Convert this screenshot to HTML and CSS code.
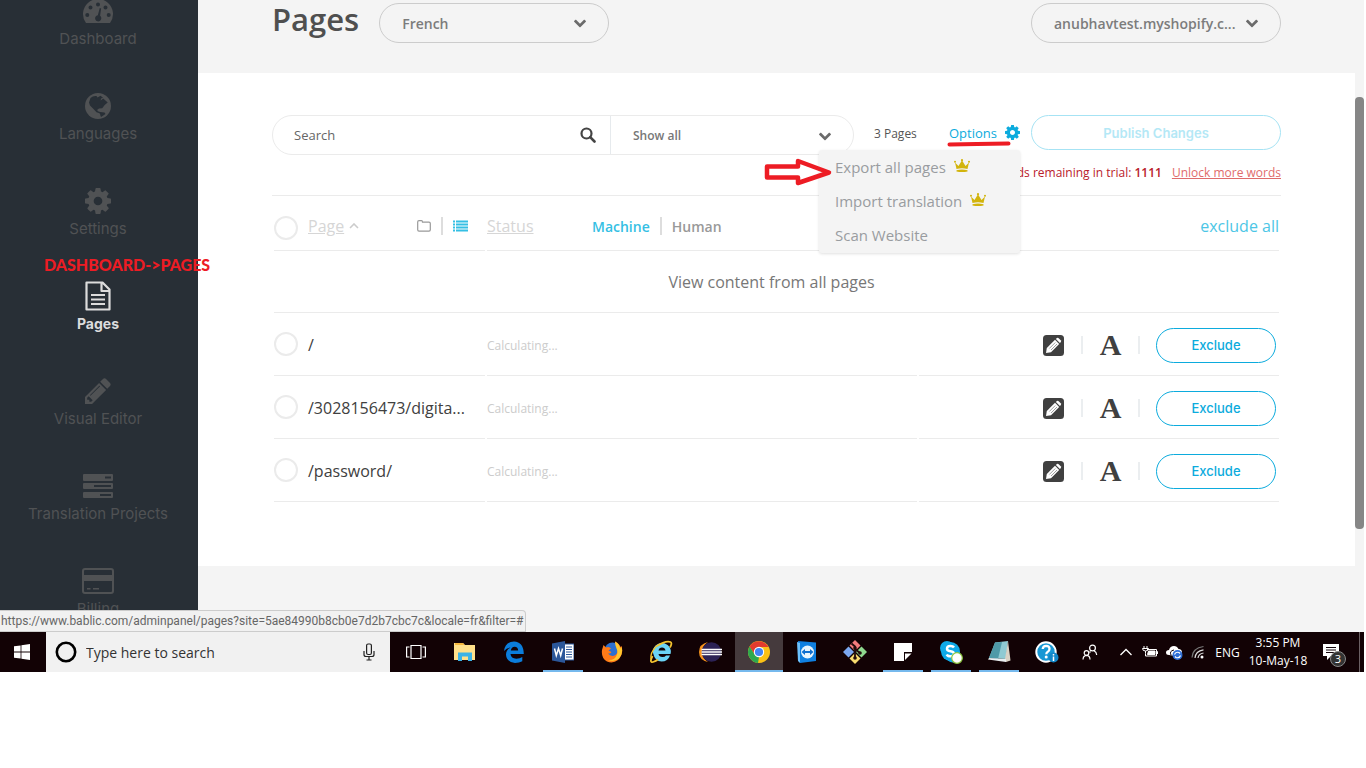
FILE: index.html
```html
<!DOCTYPE html>
<html lang="en">
<head>
<meta charset="utf-8">
<title>Pages</title>
<link rel="stylesheet" href="styles.css">
</head>
<body>
<svg class="sprite" aria-hidden="true">
  <symbol id="cog" viewBox="128 128 1536 1536"><path d="M1152 896q0-106-75-181t-181-75-181 75-75 181 75 181 181 75 181-75 75-181zm512-109v222q0 12-8 23t-20 13l-185 28q-19 54-39 91 35 50 107 138 10 12 10 25t-9 23q-27 37-99 108t-94 71q-12 0-26-9l-138-108q-44 23-91 38-16 136-29 186-7 28-36 28h-222q-14 0-24.500-8.500t-11.500-21.500l-28-184q-49-16-90-37l-141 107q-10 9-25 9-14 0-25-11-126-114-165-168-7-10-7-23 0-12 8-23 15-21 51-66.500t54-70.500q-27-50-41-99l-183-27q-13-2-21-12.500t-8-23.500v-222q0-12 8-23t19-13l186-28q14-46 39-92-40-57-107-138-10-12-10-24 0-10 9-23 26-36 98.500-107.500t94.500-71.500q13 0 26 10l138 107q44-23 91-38 16-136 29-186 7-28 36-28h222q14 0 24.500 8.500t11.500 21.500l28 184q49 16 90 37l142-107q9-9 24-9 13 0 25 10 129 119 165 170 7 8 7 22 0 12-8 23-15 21-51 66.500t-54 70.500q26 50 41 98l183 28q13 2 21 12.500t8 23.500z"/></symbol>
  <symbol id="pencil" viewBox="128 128 1536 1536"><path d="M491 1536l91-91-235-235-91 91v107h128v128h107zm523-928q0-22-22-22-10 0-17 7l-542 542q-7 7-7 17 0 22 22 22 10 0 17-7l542-542q7-7 7-17zm-54-192l416 416-832 832h-416v-416zm683 96q0 53-37 90l-166 166-416-416 166-165q36-38 90-38 53 0 91 38l235 234q37 39 37 91z"/></symbol>
  <symbol id="chevron" viewBox="90 500 1612 1100"><path d="M1683 808l-742 741q-19 19-45 19t-45-19l-742-741q-19-19-19-45.500t19-45.500l166-165q19-19 45-19t45 19l531 531 531-531q19-19 45-19t45 19l166 165q19 19 19 45.500t-19 45.500z"/></symbol>
  <symbol id="crown" viewBox="0 0 16 14"><path d="M2.500 10 1 3.500l3.500 3.500L7.600 2h.8l3.100 5L15 3.500 13.500 10q-5.500-1.600-11 0zM2.500 11.200q5.500-1.500 11 0v1.300q-5.500 1-11 0z"/><circle cx="1" cy="2.800" r="1"/><circle cx="8" cy="1.200" r="1.100"/><circle cx="15" cy="2.800" r="1"/></symbol>
  <symbol id="edit" viewBox="0 0 21 21"><rect width="21" height="21" rx="3.500" fill="#404040"/><path d="M3 18l.8-5L12 4.800l4.200 4.200L8 17.200z" fill="#fff"/><path d="M12.900 4l1-.9q1-.6 2 .3l1.800 1.900q.8.900 0 1.900l-.8.900z" fill="#fff"/><path d="M6.300 13.500l6-6M8 15l6-6" stroke="#888" stroke-width=".8"/></symbol>
</svg>

<div class="screen">
  <div class="app">
    <nav class="sidebar">
      <ul class="nav">
        <li><a class="nav-link" href="#"><svg class="nav-icon" viewBox="0 0 30 26"><path fill-rule="evenodd" d="M3 25A15 15 0 1 1 27 25zM15 4.500a2 2 0 1 0 0 4 2 2 0 1 0 0-4zM7.500 7.500a2 2 0 1 0 0 4 2 2 0 1 0 0-4zM22.500 7.500a2 2 0 1 0 0 4 2 2 0 1 0 0-4zM4.300 15a2 2 0 1 0 0 4 2 2 0 1 0 0-4zM25.700 15a2 2 0 1 0 0 4 2 2 0 1 0 0-4zM16.800 10l-2 7.200a3.100 3.100 0 1 0 2.300.6l1-7.300z"/></svg><span>Dashboard</span></a></li>
        <li><a class="nav-link" href="#"><svg class="nav-icon" viewBox="0 0 26 26"><circle cx="13" cy="13" r="13"/><path class="cut" d="M5.500 5Q8 2.500 11.500 3l1 1.500 3-1.700 2.500 2-2 .8-.3 2 2.500-2 4.500 3.900-3 2.500-2.500 3.200-3.200.3-2 1.500 1.500 1.500 2.500.7 2 1.500-2 2-1.500-2.500-3-1-3.500-3.700L5 12.500l-1-3zM15.500 19l4 .5 1 1.500-4.500 3-.8-2z"/></svg><span>Languages</span></a></li>
        <li><a class="nav-link" href="#"><svg class="nav-icon"><use href="#cog"/></svg><span>Settings</span></a></li>
        <li class="current"><strong class="note">DASHBOARD-&gt;PAGES</strong><a class="nav-link" href="#" aria-current="page"><svg class="nav-icon tall" viewBox="0 0 26 30"><path fill="none" stroke="currentColor" stroke-width="2.200" stroke-linejoin="round" d="M1.500 1.500h16l7 7v20h-23zM16.500 2v8h8"/><path d="M6 13h14v2H6zM6 17.500h14v2H6zM6 22h14v2H6z"/></svg><span>Pages</span></a></li>
        <li><a class="nav-link" href="#"><svg class="nav-icon"><use href="#pencil"/></svg><span>Visual Editor</span></a></li>
        <li><a class="nav-link" href="#"><svg class="nav-icon" viewBox="0 0 30 26"><path fill-rule="evenodd" d="M1 1h28q1 0 1 1v5q0 1-1 1H1Q0 8 0 7V2q0-1 1-1zm21 2.500v2h6v-2zM1 10h28q1 0 1 1v4q0 1-1 1H1q-1 0-1-1v-4q0-1 1-1zm10 2v2h17v-2zM1 19h28q1 0 1 1v4q0 1-1 1H1q-1 0-1-1v-4q0-1 1-1zm16 2v2h11v-2z"/></svg><span>Translation Projects</span></a></li>
        <li><a class="nav-link" href="#"><svg class="nav-icon" viewBox="0 0 32 26"><rect x="1" y="1" width="30" height="24" rx="2" fill="none" stroke="currentColor" stroke-width="2"/><path d="M1 7h30v6H1zM5 20h3.500v1.500H5zM11 20h6v1.500h-6z"/></svg><span>Billing</span></a></li>
      </ul>
    </nav>

    <main class="main">
      <header class="page-head">
        <h1 class="title">Pages</h1>
        <div class="pick language">
          <select class="pick-box" aria-label="Language"><option>French</option></select>
          <svg class="chevron"><use href="#chevron"/></svg>
        </div>
        <div class="pick site">
          <select class="pick-box" aria-label="Site"><option>anubhavtest.myshopify.c...</option></select>
          <svg class="chevron"><use href="#chevron"/></svg>
        </div>
      </header>

      <section class="panel">
        <div class="tools">
          <div class="filter">
            <div class="search">
              <input class="search-box" type="search" placeholder="Search" aria-label="Search">
              <svg class="search-icon" viewBox="0 0 16 16"><circle cx="6.500" cy="6.500" r="5" fill="none" stroke="currentColor" stroke-width="2.200"/><path d="M10.200 10.200l4.300 4.300" stroke="currentColor" stroke-width="2.600" stroke-linecap="round"/></svg>
            </div>
            <div class="pick show">
              <select class="pick-box" aria-label="Show"><option>Show all</option></select>
              <svg class="chevron"><use href="#chevron"/></svg>
            </div>
          </div>
          <span class="count">3 Pages</span>
          <div class="options">
            <button class="options-btn" type="button">Options<svg class="options-cog"><use href="#cog"/></svg></button>
            <svg class="underline" viewBox="0 0 64 6"><path d="M2.500 3.500L30 3l31.500-.5" stroke="#ed1c24" stroke-width="4" stroke-linecap="round"/></svg>
            <ul class="menu">
              <li><a href="#">Export all pages<svg class="crown"><use href="#crown"/></svg></a></li>
              <li><a href="#">Import translation<svg class="crown"><use href="#crown"/></svg></a></li>
              <li><a href="#">Scan Website</a></li>
            </ul>
            <svg class="arrow" viewBox="0 0 68 28"><path d="M3 8.500h31V3l31 11.500L34 25v-5.500H3z" fill="none" stroke="#ed1c24" stroke-width="4.500" stroke-linejoin="round"/></svg>
          </div>
          <button class="publish" type="button" disabled>Publish Changes</button>
        </div>
        <p class="trial">Words remaining in trial: <b>1111</b><a href="#">Unlock more words</a></p>

        <table class="pages">
          <colgroup><col class="col-page"><col class="col-status"><col class="col-actions"></colgroup>
          <thead>
            <tr>
              <th>
                <div class="cell head-page">
                  <input class="tick" type="checkbox" aria-label="Select all">
                  <a class="sort" href="#">Page</a>
                  <svg class="caret" viewBox="0 0 10 6"><path d="M1 5l4-4 4 4" fill="none" stroke="currentColor" stroke-width="1.600"/></svg>
                  <button class="view folder" type="button" aria-label="Folder view"><svg width="14" height="12" viewBox="0 0 14 12"><path d="M.7 2q0-1.300 1.300-1.300h2.500q1 0 1 1.500H12q1.300 0 1.300 1.300v6.300q0 1.300-1.300 1.300H2Q.7 11.100.7 9.800z" fill="none" stroke="#999" stroke-width="1.200"/></svg></button>
                  <i class="bar"></i>
                  <button class="view" type="button" aria-label="List view"><svg width="15" height="12" viewBox="0 0 15 12"><path d="M0 .5h2v2H0zM3 .5h12v2H3zM0 3.500h2v2H0zM3 3.500h12v2H3zM0 6.500h2v2H0zM3 6.500h12v2H3zM0 9.500h2v2H0zM3 9.500h12v2H3z" fill="#35bfe4"/></svg></button>
                </div>
              </th>
              <th>
                <div class="cell">
                  <a class="sort status" href="#">Status</a>
                  <button class="kind on" type="button">Machine</button>
                  <i class="bar"></i>
                  <button class="kind" type="button">Human</button>
                </div>
              </th>
              <th><a class="exclude-all" href="#">exclude all</a></th>
            </tr>
          </thead>
          <tbody>
            <tr><td class="all" colspan="3"><a href="#">View content from all pages</a></td></tr>
            <tr>
              <td><label class="cell"><input class="tick" type="checkbox"><span class="path">/</span></label></td>
              <td class="state">Calculating...</td>
              <td><div class="cell actions"><button class="act" type="button" aria-label="Edit"><svg width="21" height="21"><use href="#edit"/></svg></button><button class="act letter" type="button">A</button><button class="exclude" type="button">Exclude</button></div></td>
            </tr>
            <tr>
              <td><label class="cell"><input class="tick" type="checkbox"><span class="path">/3028156473/digita...</span></label></td>
              <td class="state">Calculating...</td>
              <td><div class="cell actions"><button class="act" type="button" aria-label="Edit"><svg width="21" height="21"><use href="#edit"/></svg></button><button class="act letter" type="button">A</button><button class="exclude" type="button">Exclude</button></div></td>
            </tr>
            <tr>
              <td><label class="cell"><input class="tick" type="checkbox"><span class="path">/password/</span></label></td>
              <td class="state">Calculating...</td>
              <td><div class="cell actions"><button class="act" type="button" aria-label="Edit"><svg width="21" height="21"><use href="#edit"/></svg></button><button class="act letter" type="button">A</button><button class="exclude" type="button">Exclude</button></div></td>
            </tr>
          </tbody>
        </table>
      </section>
    </main>
    <div class="scroll"><div class="thumb"></div></div>
    <div class="link-status">https://www.bablic.com/adminpanel/pages?site=5ae84990b8cb0e7d2b7cbc7c&amp;locale=fr&amp;filter=#</div>
  </div>

  <footer class="taskbar">
    <button class="start" type="button" aria-label="Start"><svg width="16" height="16" viewBox="0 0 16 16" fill="#fff"><path d="M0 2.300l6.600-.9v6.200H0zM7.400 1.300L16 0v7.600H7.400zM0 8.400h6.600v6.200L0 13.700zM7.400 8.400H16V16l-8.600-1.200z"/></svg></button>
    <label class="ask">
      <svg width="22" height="22" viewBox="0 0 22 22"><circle cx="11" cy="11" r="9.200" fill="none" stroke="#000" stroke-width="2.600"/></svg>
      <input class="ask-box" type="text" placeholder="Type here to search">
      <svg width="12" height="18" viewBox="0 0 12 18" fill="none" stroke="#222" stroke-width="1.200"><rect x="3.600" y="1" width="4.800" height="10.500" rx="1.500"/><path d="M1 8v3.500q0 2 2 2h6q2 0 2-2V8M6 13.500V17M3.500 17h5"/></svg>
    </label>
    <div class="apps left">
      <button class="task" type="button" aria-label="Task view"><svg width="20" height="16" viewBox="0 0 20 16" fill="none" stroke="#fff" stroke-width="1.200"><path d="M5 1.500h10v13H5zM3.500 3H.6v10h2.900M16.500 3h2.900v10h-2.900"/></svg></button>
      <button class="task" type="button" aria-label="File Explorer"><svg width="22" height="20" viewBox="0 0 22 20"><path d="M0 1h9l2 2h10v15H0z" fill="#ffe08a"/><path d="M1 1h8l1.500 2H1z" fill="#f5b73d"/><path d="M4 10.500h14V19h-4v-4.500H8V19H4z" fill="#3cb3e6"/></svg></button>
      <button class="task" type="button" aria-label="Edge"><svg width="22" height="22" viewBox="0 0 22 22"><path d="M1 10Q2 1 11 .5q9.500.4 9.800 12.500H7.500q.5 4.500 5.800 4.700 3.600 0 6-1.700v4.300q-3 1.700-7.300 1.700Q3.500 21 3 13.700 3 9 7.500 6.500 3.500 7 1 10zM7.800 9.500h7.400q-.2-3.700-3.600-3.800-3.200.2-3.800 3.800z" fill="#0b7ddb"/></svg></button>
      <button class="task open" type="button" aria-label="Word"><svg width="22" height="22" viewBox="0 0 22 22"><path d="M11 3h11v16H11z" fill="#fff" stroke="#2b579a"/><path d="M14 6h6M14 8.500h6M14 11h6M14 13.500h6M14 16h6" stroke="#2b579a"/><path d="M0 2.500L13 0v22L0 19.500z" fill="#2b579a"/><path d="M2.500 7.500l1.800 7 2.200-7 2.200 7 1.800-7" fill="none" stroke="#fff" stroke-width="1.500"/></svg></button>
      <button class="task" type="button" aria-label="Firefox"><svg width="22" height="22" viewBox="0 0 22 22"><circle cx="11.500" cy="9.500" r="8" fill="#2b6fd0"/><path d="M1 9l1.500-5 2.500 2.500Q8 5 10 7.500L7.500 9.500l3 1.500q-1 2-3.500 1.500 3 4 7.500 1.500 3.500-3 1.500-7-1-3-2-6.500 5.500 3 5 5.500l1.500-1Q23 13 17 19q-5 4-11 1.500Q0 17 1 9z" fill="#ff7a18"/><path d="M14 .5q5 3 5 7l1.500-1.500q2 6-2.500 11.500-5 4-11 1.500 7 .5 9-5.500 1-3-.5-6T14 .5z" fill="#ffc72e"/></svg></button>
      <button class="task" type="button" aria-label="Internet Explorer"><svg width="24" height="24" viewBox="0 0 24 24"><path d="M4 13a9 8.500 0 1 1 17.500 1H9.500q.5 3 4 3 2.500 0 3.500-1.500h4q-2 6-8.500 6T4 13zm5.500-2.500h7q-.5-3-3.500-3t-3.500 3z" fill="#6bd3f5"/><path d="M3.500 16Q0 23 4 22q3-1 5-2.500M7 6.500Q17 0 21.500 2q2 1-.5 5.500" fill="none" stroke="#f2c230" stroke-width="1.800"/><path d="M7 6.500Q1 13 2 19" fill="none" stroke="#f2c230" stroke-width="1.300"/></svg></button>
      <button class="task" type="button" aria-label="Eclipse"><svg width="24" height="22" viewBox="0 0 24 22"><path d="M10 1Q1 3 1 11t9 10q-6-4-6-10t6-10z" fill="#f7941e"/><circle cx="13.500" cy="11" r="9.800" fill="#2c2255"/><path d="M3.500 8.500H24M3.500 11H24M3.500 13.500H24" stroke="#fff" stroke-width="1.300"/></svg></button>
      <button class="task open active" type="button" aria-label="Chrome"><svg width="22" height="22" viewBox="0 0 22 22"><circle cx="11" cy="11" r="11" fill="#fbc116"/><path d="M11 11L6.700 13.500 1.500 5.500A11 11 0 0 1 20.500 6H11z" fill="#e33b2e"/><path d="M1.500 5.500l5.200 8L11 16l-1 6A11 11 0 0 1 1.500 5.500z" fill="#2da94f"/><circle cx="11" cy="11" r="5.200" fill="#fff"/><circle cx="11" cy="11" r="4.100" fill="#4285f4"/></svg></button>
    </div>
    <div class="apps">
      <button class="task" type="button" aria-label="TeamViewer"><svg width="20" height="22" viewBox="0 0 20 22"><path d="M1 0l18 1.500V20L3 22z" fill="#0f7fe0"/><path d="M0 1l3 1v20l-2-2z" fill="#6bc1ff"/><circle cx="10.500" cy="11" r="6.500" fill="#e8f4fd"/><path d="M4.500 11L8 8v2h5V8l3.500 3-3.500 3v-2H8v2z" fill="#0f6fd0"/></svg></button>
      <button class="task" type="button" aria-label="Git"><svg width="24" height="24" viewBox="0 0 24 24"><path d="M12 0l5.500 5.500L12 11 6.500 5.500z" fill="#f47c7c"/><path d="M5.500 6.500L11 12l-5.500 5.500L0 12z" fill="#7ba7f0"/><path d="M18.500 6.500L24 12l-5.500 5.500L13 12z" fill="#8fd98f"/><path d="M12 13l5.500 5.500L12 24l-5.500-5.500z" fill="#f7dc6f"/><path d="M8.500 3.500l3.500 3V18M12 9l5 4" stroke="#210b0b" stroke-width="1.800" fill="none"/><circle cx="12" cy="18" r="1.800" fill="#210b0b"/><circle cx="17" cy="13" r="1.800" fill="#210b0b"/><circle cx="12" cy="8" r="1.800" fill="#210b0b"/></svg></button>
      <button class="task open" type="button" aria-label="Sticky Notes"><svg width="18" height="18" viewBox="0 0 18 18"><path d="M0 0h18v9h-8v9H0z" fill="#fff"/><path d="M11 17v-6.500h6.500z" fill="#fff"/></svg></button>
      <button class="task open" type="button" aria-label="Skype"><svg width="24" height="24" viewBox="0 0 24 24"><circle cx="8" cy="8" r="7" fill="#0faae8"/><circle cx="11.500" cy="11.500" r="9.500" fill="#0faae8"/><circle cx="14" cy="15" r="7.500" fill="#0faae8"/><path d="M15 7.500Q14 6 11.500 6 8 6 8 8.700q0 2 3.500 2.600t3.500 2.500q0 2.500-3.500 2.500-3 0-3.800-1.800" fill="none" stroke="#fff" stroke-width="2.500"/><circle cx="18" cy="18" r="5.300" fill="#fff" stroke="#8cc63f" stroke-width="1.200"/></svg></button>
      <button class="task open" type="button" aria-label="Notepad"><svg width="24" height="22" viewBox="0 0 24 22"><path d="M8 1.500L21 0l-2 18-17-1z" fill="#8fcad3"/><path d="M8 1.500L15 1 11 18l-9-1z" fill="#4f9aa8"/><path d="M21 0l2.500 19.500L19 21l-1-3z" fill="#d9d2c5"/><path d="M2 17l17 1v3L1 18.500z" fill="#e9eef0"/></svg></button>
      <button class="task" type="button" aria-label="Get Help"><svg width="24" height="22" viewBox="0 0 24 22"><circle cx="11" cy="11" r="9.700" fill="#1797d4" stroke="#fff" stroke-width="2"/><path d="M7.700 8q.3-3.200 3.500-3.200 3.300.2 3.300 3 0 2-1.700 3-1.500.8-1.500 2.500" fill="none" stroke="#fff" stroke-width="2.300"/><circle cx="11.200" cy="16" r="1.500" fill="#fff"/><circle cx="18.500" cy="16.500" r="5" fill="#1187c9"/><path d="M18.500 13v1.500M18.500 15.500V20" stroke="#fff" stroke-width="1.500"/></svg></button>
    </div>
    <div class="tray">
      <button class="people" type="button" aria-label="People"><svg width="16" height="16" viewBox="0 0 16 16" fill="none" stroke="#fff" stroke-width="1.200"><circle cx="10.500" cy="4" r="2.900"/><path d="M8.500 7.500l-1 1M12 6.800q2.500 1.200 2.700 4.200"/><circle cx="4.500" cy="9" r="2.300"/><path d="M1 15.500q.2-4 3.500-4.200Q8 11.500 8 15.500"/></svg></button>
      <button class="mini" type="button" aria-label="Show hidden icons"><svg width="14" height="8" viewBox="0 0 14 8"><path d="M1.500 7L7 1.500 12.500 7" fill="none" stroke="#fff" stroke-width="1.300"/></svg></button>
      <button class="mini" type="button" aria-label="Battery"><svg width="16" height="12" viewBox="0 0 16 12" fill="none" stroke="#fff"><path d="M5 3.500h9.500v6.500H3.500V7.500M14.500 5.500h1v2.500"/><path d="M6.500 5h6.500v3.500H5.500z" fill="#fff"/><path d="M2 0v2.500M5 0v2.500M.5 2.500h6q0 2.500-3 2.500t-3-2.500zM3.500 5v2.500"/></svg></button>
      <button class="mini" type="button" aria-label="OneDrive"><svg width="17" height="15" viewBox="0 0 17 15"><path d="M3 10Q0 10 0 7.500T3 5Q4 1 8 1q3 0 4.500 3Q16 4 16 7.500L10 11z" fill="#fff"/><path d="M5 10q-2-4 3-5" stroke="#14040a" fill="none"/><circle cx="11.500" cy="10" r="5" fill="#2f6fd6"/><path d="M8.500 9.500q1-3 4.500-2l1 1M14.500 10.500q-1 3-4.500 2l-1-1" stroke="#fff" fill="none" stroke-width="1.200"/></svg></button>
      <button class="mini" type="button" aria-label="Wi-Fi"><svg width="14" height="14" viewBox="0 0 14 14" fill="none" stroke-width="1.200"><path d="M1 12.500Q1.500 3 12.500 1.500" stroke="#777"/><path d="M4 13Q4.500 6 12.500 4.800M7 13Q7.500 8.800 12.500 8" stroke="#ddd"/><circle cx="11" cy="12" r="1.500" fill="#fff"/></svg></button>
      <button class="lang" type="button">ENG</button>
      <button class="clock" type="button">3:55 PM<br>10-May-18</button>
      <button class="notices" type="button" aria-label="3 notifications"><svg width="17" height="18" viewBox="0 0 17 18"><path d="M0 1h16v12H8l-4 4v-4H0z" fill="#fff"/><path d="M3 4.500h10M3 7h10M3 9.500h10" stroke="#14040a"/></svg><span class="badge">3</span></button>
      <i class="peek"></i>
    </div>
  </footer>
</div>
</body>
</html>
```

FILE: styles.css
```css
* { box-sizing: border-box; }
body { margin: 0; background: #fff; font-family: "Open Sans", "Noto Sans", sans-serif; font-size: 16px; color: #404040; }
button, input, select { font: inherit; color: inherit; margin: 0; padding: 0; border: 0; background: none; }
ul { list-style: none; margin: 0; padding: 0; }
a { color: inherit; text-decoration: none; }
svg { display: block; flex: none; }
svg:not([fill]) { fill: currentColor; }
.sprite { position: absolute; width: 0; height: 0; }

.screen { margin-right: 2px; }
.app { position: relative; display: flex; background: #f4f4f4; overflow: hidden; }

/* Sidebar */
.sidebar { flex: none; width: 198px; background: #282f36; color: #505254; padding: 0 2px 12px 0; }
.nav { display: flex; flex-direction: column; gap: 43px; margin-top: -2px; }
.nav li { position: relative; }
.nav-link { display: flex; flex-direction: column; align-items: center; gap: 4px; font: 400 15px/22px Inter, sans-serif; }
.nav-icon { width: 32px; height: 26px; }
.nav-icon.tall { height: 30px; margin: -2px 0; }
.nav .current .nav-link { color: #dcdcdc; font-size: 14px; font-weight: 700; }
.cut { fill: #282f36; }
.note { position: absolute; left: 44px; top: -28px; font: 900 16px/20px Lato, sans-serif; color: #ed1c24; white-space: nowrap; z-index: 2; }

/* Page header */
.main { flex: 1; min-width: 0; }
.page-head { display: flex; align-items: flex-start; padding: 3px 74px 30px; }
.title { margin: 0 20px 0 0; font-size: 31px; font-weight: 600; line-height: 32px; color: #4f4f4f; }
.pick { position: relative; height: 40px; }
.pick-box { appearance: none; width: 100%; height: 100%; padding: 0 22px; border: 1px solid #ccc; border-radius: 20px; font-size: 14px; font-weight: 600; color: #7c7c7c; }
.chevron { position: absolute; right: 23px; top: 16px; width: 12px; height: 9px; color: #6b6b6b; pointer-events: none; }
.language { width: 230px; }
.site { width: 250px; margin-left: auto; }

/* Toolbar */
.panel { background: #fff; padding: 42px 74px 64px; }
.tools { display: flex; align-items: flex-start; }
.filter { flex: 1; display: flex; height: 40px; border: 1px solid #ebebeb; border-radius: 20px; }
.search { flex: 1; display: flex; align-items: center; padding: 0 14px 0 21px; border-right: 1px solid #e6eaed; }
.search-box { flex: 1; min-width: 0; height: 100%; font-size: 13px; outline: 0; }
.search-box::placeholder { color: #666; opacity: 1; }
.search-icon { width: 16px; height: 16px; color: #444; }
.show { width: 242px; height: 38px; }
.show .pick-box { border: 0; font-size: 12px; color: #777; }
.show .chevron { right: 22px; }
.count { width: 95px; padding-left: 20px; font-size: 12px; line-height: 38px; color: #555; }
.options { position: relative; width: 71px; margin-right: 11px; }
.options-btn { display: flex; align-items: center; justify-content: space-between; width: 100%; height: 35px; font-size: 13px; color: #0cabdd; }
.options-cog { width: 15px; height: 15px; }
.underline { position: absolute; left: -2px; top: 26px; width: 64px; height: 6px; z-index: 3; }
.menu { position: absolute; right: 0; top: 100%; width: 201px; background: #f4f4f4; border-radius: 3px; box-shadow: 0 1px 3px rgba(0, 0, 0, .12); z-index: 2; padding-bottom: 1px; }
.menu a { display: flex; align-items: center; height: 34px; padding-left: 16px; font-size: 15px; color: #999ca0; white-space: nowrap; }
.crown { width: 16px; height: 14px; margin: 0 0 2px 8px; color: #d2b40c; }
.arrow { position: absolute; right: 188px; top: 43px; width: 68px; height: 28px; z-index: 3; }
.publish { width: 250px; height: 35px; border: 1px solid #a6e3f4; border-radius: 18px; font: 600 13px/20px Inter, sans-serif; color: #b4e8f6; }
.trial { display: flex; justify-content: flex-end; margin: 7px 0 0; padding: 0 0 12px; line-height: 21px; border-bottom: 1px solid #ebebeb; font-size: 12px; color: #b9202b; white-space: pre; }
.trial b { font-weight: 600; }
.trial a { margin-left: 10px; color: #df6b6b; text-decoration: underline; }

/* Pages table */
.pages { width: 100%; table-layout: fixed; border-collapse: separate; border-spacing: 2px 0; }
.col-page { width: 211px; }
.col-actions { width: 360px; }
.pages th, .pages td { height: 63px; padding: 2px 0 0; border-bottom: 1px solid #ebebeb; font-weight: 400; text-align: left; }
.pages thead th { height: 55px; padding-top: 6px; }
.cell { display: flex; align-items: center; }
.tick { appearance: none; flex: none; width: 24px; height: 24px; margin: -2px 10px 0 0; border: 2px solid #ebebeb; border-radius: 50%; background: #fff; }
.head-page .tick { margin-top: 4px; }
.sort { color: #d6d6d6; text-decoration: underline; }
.caret { width: 10px; height: 6px; margin-left: 5px; color: #ccc; }
.view { display: flex; }
.folder { margin-left: auto; }
.bar { width: 2px; height: 18px; background: #ddd; margin: 0 10px; }
.head-page .view:last-child { margin-right: 17px; }
.status { width: 105px; }
.kind { font-size: 14px; font-weight: 600; color: #999; }
.kind.on { color: #35bfe4; }
.exclude-all { display: block; text-align: right; color: #4cc6e6; }
.pages .all { height: 62px; padding: 0; text-align: center; color: #777; }
.all a { margin-right: 10px; }
.path { color: #404040; }
.pages .state { font-size: 12px; color: #ccc; }
.actions { justify-content: flex-end; padding-right: 3px; }
.act { display: flex; justify-content: center; align-items: center; width: 57px; height: 18px; border-right: 2px solid #ebeef0; color: #404040; }
.letter { font: 700 30px/18px "Liberation Serif", serif; }
.exclude { width: 120px; height: 35px; margin-left: 16px; border: 1px solid #0cabdd; border-radius: 18px; font: 500 13px/20px Inter, sans-serif; color: #0cabdd; }

/* Scroll bar and link preview */
.scroll { flex: none; width: 9px; padding-top: 97px; }
.thumb { height: 432px; border-radius: 4px; background: #868686; }
.link-status { position: absolute; left: 0; bottom: 0; height: 22px; padding: 0 1px; border: 1px solid #ccc; border-left: 0; border-radius: 0 4px 0 0; background: #f1f1f1; font: 12px/21px Roboto, sans-serif; color: #666; white-space: nowrap; }

/* Taskbar */
.taskbar { display: flex; height: 40px; background: #120205; color: #fff; }
.taskbar button { display: flex; flex: none; align-items: center; justify-content: center; }
.start { width: 44px; margin-right: 2px; }
.ask { display: flex; flex: none; align-items: center; width: 344px; padding: 0 15px 0 9px; background: #f1f1f1; gap: 9px; }
.ask-box { flex: 1; min-width: 0; font-size: 14px; outline: 0; }
.ask-box::placeholder { color: #333; opacity: 1; }
.apps { display: flex; }
.apps.left { gap: 1px; padding-left: 2px; }
.task { position: relative; width: 48px; }
.task.open::after { content: ""; position: absolute; left: 4px; right: 4px; bottom: 0; height: 2px; background: #76b9ed; }
.task.active { background: #453a3d; }
.taskbar .task.active::after { left: 0; right: 0; }
.tray { display: flex; flex: none; margin-left: auto; }
.people { width: 42px; }
.taskbar .people { padding-right: 6px; }
.mini { width: 24px; }
.lang { width: 35px; font-size: 12px; }
.clock { width: 66px; font-size: 12px; line-height: 18px; text-align: center; white-space: nowrap; }
.notices { position: relative; width: 48px; }
.taskbar .notices { padding-right: 8px; }
.badge { position: absolute; left: 19px; top: 19px; width: 16px; height: 16px; border: 1px solid #888; border-radius: 50%; background: #333; font-size: 11px; line-height: 14px; text-align: center; }
.peek { width: 5px; border-left: 1px solid #6a6063; }
```
